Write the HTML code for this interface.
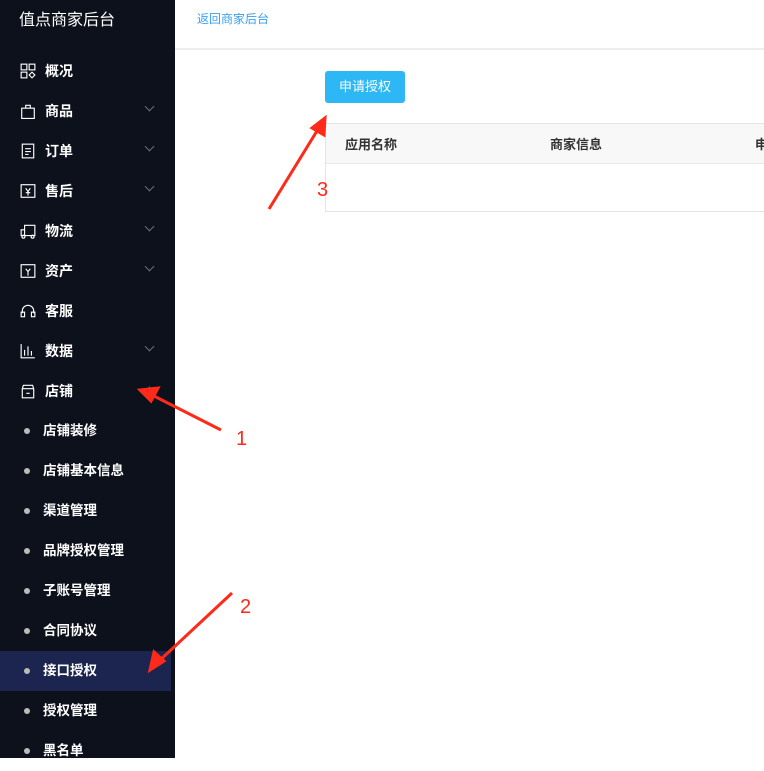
<!DOCTYPE html>
<html><head><meta charset="utf-8"><style>
*{margin:0;padding:0;box-sizing:border-box}
body{width:764px;height:758px;overflow:hidden;font-family:"Liberation Sans","Noto Sans CJK SC",sans-serif;background:#fff;position:relative}
.side{position:absolute;left:0;top:0;width:175px;height:758px;background:#0c111c}
.title{position:absolute;left:19px;top:6px;color:#fff;font-size:16px}
.it{position:absolute;left:0;width:171px;height:40px;color:#fff;font-size:14px;font-weight:bold;line-height:40px}
.it .ic{position:absolute;left:20px;top:12px;width:16px;height:16px}
.it .tx{position:absolute;left:45px}
.it .ch{position:absolute;left:146px;top:12px;width:7px;height:7px;border-right:1.5px solid #6b6f78;border-bottom:1.5px solid #6b6f78;transform:rotate(45deg)}
.sub .dot{position:absolute;left:24px;top:17px;width:6px;height:6px;border-radius:50%;background:#bbb}
.sub .tx{left:43px;font-size:13.5px}
.act{background:#1b2550}
.hdr{position:absolute;left:175px;top:0;right:0;height:50px;border-bottom:2px solid #eee}
.hdr a{position:absolute;left:22px;top:10px;font-size:12px;color:#3a9ff0}
.btn{position:absolute;left:325px;top:71px;width:80px;height:32px;background:#2db7f5;border-radius:3px;color:#fff;font-size:13px;text-align:center;line-height:32px}
.tbl{position:absolute;left:325px;top:123px;width:450px;height:89px;border:1px solid #e4e4e4}
.th{height:40px;background:#f8f8f8;border-bottom:1px solid #e8e8e8;font-size:13px;color:#333;font-weight:bold;position:relative}
.th span{position:absolute;top:10px}
svg.ov{position:absolute;left:0;top:0}
</style></head><body>
<div class="side">
<div class="title">值点商家后台</div>
<div class="it" style="top:51px"><svg class="ic" viewBox="0 0 14 14" fill="none" stroke="#fff"><rect x="1" y="1" width="5" height="5"/><rect x="8" y="1" width="5" height="5"/><rect x="1" y="8" width="5" height="5"/><path d="M10.5 8l2.5 2.5-2.5 2.5-2.5-2.5z"/></svg><span class="tx">概况</span></div>
<div class="it" style="top:91px"><svg class="ic" viewBox="0 0 14 14" fill="none" stroke="#fff"><path d="M1.5 4.5h11v9h-11z M5 4.5V2h4v2.5"/></svg><span class="tx">商品</span><i class="ch"></i></div>
<div class="it" style="top:131px"><svg class="ic" viewBox="0 0 14 14" fill="none" stroke="#fff"><rect x="2" y="1" width="10" height="12"/><path d="M4.5 5h5M4.5 7.5h5M4.5 10h3"/></svg><span class="tx">订单</span><i class="ch"></i></div>
<div class="it" style="top:171px"><svg class="ic" viewBox="0 0 14 14" fill="none" stroke="#fff"><rect x="1" y="1.5" width="12" height="11"/><path d="M5 4.5l2 3 2-3M7 7.5V11M5 8.5h4"/></svg><span class="tx">售后</span><i class="ch"></i></div>
<div class="it" style="top:211px"><svg class="ic" viewBox="0 0 14 14" fill="none" stroke="#fff"><path d="M4 2h9v9H4zM4 6H1v5h3"/><circle cx="3" cy="12" r="1.3"/><circle cx="11" cy="12" r="1.3"/></svg><span class="tx">物流</span><i class="ch"></i></div>
<div class="it" style="top:251px"><svg class="ic" viewBox="0 0 14 14" fill="none" stroke="#fff"><rect x="1" y="1.5" width="12" height="11"/><path d="M5 5l2 2.5 2-2.5M7 7.5V11"/></svg><span class="tx">资产</span><i class="ch"></i></div>
<div class="it" style="top:291px"><svg class="ic" viewBox="0 0 14 14" fill="none" stroke="#fff"><path d="M2 9V7a5 5 0 0110 0v2"/><rect x="1" y="8" width="3" height="4"/><rect x="10" y="8" width="3" height="4"/></svg><span class="tx">客服</span></div>
<div class="it" style="top:331px"><svg class="ic" viewBox="0 0 14 14" fill="none" stroke="#fff"><path d="M1 1v12h12M4 11V6M7 11V3M10 11V7"/></svg><span class="tx">数据</span><i class="ch"></i></div>
<div class="it" style="top:371px"><svg class="ic" viewBox="0 0 14 14" fill="none" stroke="#fff"><path d="M2 5l1-3h8l1 3v8H2zM2 5h10M5.5 9h3"/></svg><span class="tx">店铺</span><i class="ch" style="transform:rotate(225deg);top:17px"></i></div>
<div class="it sub" style="top:411px"><i class="dot"></i><span class="tx">店铺装修</span></div>
<div class="it sub" style="top:451px"><i class="dot"></i><span class="tx">店铺基本信息</span></div>
<div class="it sub" style="top:491px"><i class="dot"></i><span class="tx">渠道管理</span></div>
<div class="it sub" style="top:531px"><i class="dot"></i><span class="tx">品牌授权管理</span></div>
<div class="it sub" style="top:571px"><i class="dot"></i><span class="tx">子账号管理</span></div>
<div class="it sub" style="top:611px"><i class="dot"></i><span class="tx">合同协议</span></div>
<div class="it sub act" style="top:651px"><i class="dot"></i><span class="tx">接口授权</span></div>
<div class="it sub" style="top:691px"><i class="dot"></i><span class="tx">授权管理</span></div>
<div class="it sub" style="top:731px"><i class="dot"></i><span class="tx">黑名单</span></div>
</div>
<div class="hdr"><a>返回商家后台</a></div>
<div class="btn">申请授权</div>
<div class="tbl"><div class="th"><span style="left:19px">应用名称</span><span style="left:224px">商家信息</span><span style="left:429px">申</span></div></div>
<svg class="ov" width="764" height="758">
<g stroke="#ff2a1a" stroke-width="3" fill="#ff2a1a">
<line x1="221" y1="430" x2="150" y2="394"/><polygon points="140,390 158,388 151,401" />
<line x1="232" y1="593" x2="158" y2="662"/><polygon points="150,670 154,652 164,661"/>
<line x1="269" y1="209" x2="320" y2="126"/><polygon points="325,118 324,135 312,128"/>
</g>
<g fill="#ff2a1a" font-family="Liberation Sans,sans-serif" font-size="20"><text x="236" y="445">1</text><text x="240" y="613">2</text><text x="317" y="196">3</text></g>
</svg>
</body></html>
